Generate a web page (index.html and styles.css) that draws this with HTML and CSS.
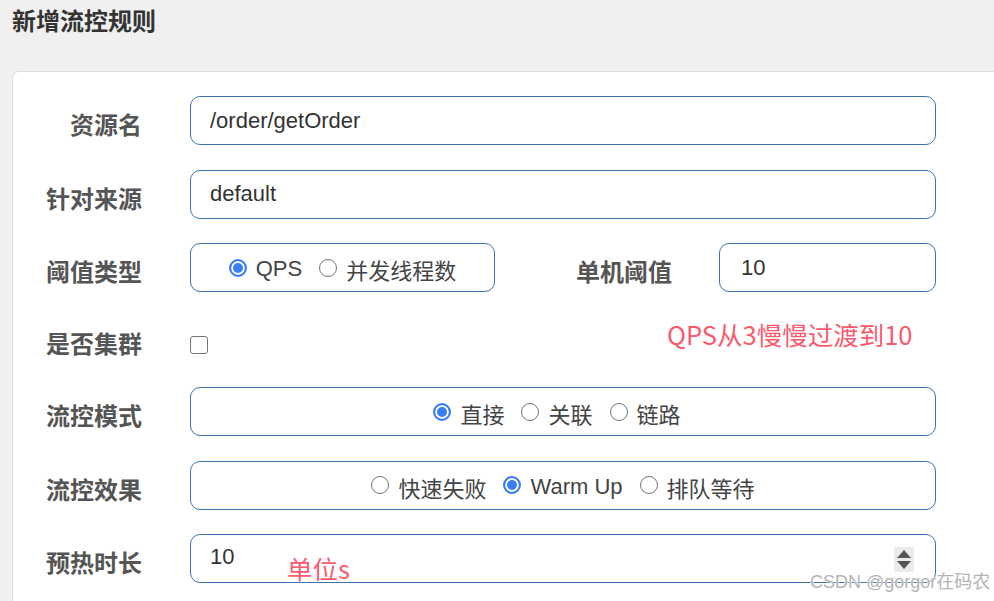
FILE: index.html
```html
<!DOCTYPE html>
<html lang="zh">
<head>
<meta charset="utf-8">
<title>新增流控规则</title>
<link rel="stylesheet" href="styles.css">
</head>
<body>
<h4 class="title">新增流控规则</h4>
<div class="card">
  <div class="form">
    <div class="row">
      <label class="lbl">资源名</label>
      <div class="field">/order/getOrder</div>
    </div>
    <div class="row">
      <label class="lbl">针对来源</label>
      <div class="field">default</div>
    </div>
    <div class="row">
      <label class="lbl">阈值类型</label>
      <div class="split">
        <div class="field group narrow">
          <span class="opt"><span class="radio on"></span>QPS</span>
          <span class="opt"><span class="radio"></span>并发线程数</span>
        </div>
        <label class="lbl lbl2">单机阈值</label>
        <div class="field grow">10</div>
      </div>
    </div>
    <div class="row short">
      <label class="lbl">是否集群</label>
      <div class="chkwrap"><span class="check"></span></div>
    </div>
    <div class="row">
      <label class="lbl">流控模式</label>
      <div class="field group shifted">
        <span class="opt"><span class="radio on"></span>直接</span>
        <span class="opt"><span class="radio"></span>关联</span>
        <span class="opt"><span class="radio"></span>链路</span>
      </div>
    </div>
    <div class="row">
      <label class="lbl">流控效果</label>
      <div class="field group">
        <span class="opt"><span class="radio"></span>快速失败</span>
        <span class="opt"><span class="radio on"></span>Warm Up</span>
        <span class="opt"><span class="radio"></span>排队等待</span>
      </div>
    </div>
    <div class="row">
      <label class="lbl">预热时长</label>
      <div class="field num">
        <span>10</span>
        <span class="spin"><span class="up"></span><span class="down"></span></span>
      </div>
    </div>
  </div>
</div>
<div class="note note-qps">QPS从3慢慢过渡到10</div>
<div class="note note-unit">单位s</div>
<div class="watermark">CSDN @gorgor在码农</div>
</body>
</html>
```
FILE: styles.css
```css
html, body {
  margin: 0;
  padding: 0;
}
body {
  background: #f0f0f0;
  width: 994px;
  height: 601px;
  overflow: hidden;
  position: relative;
  font-family: "Liberation Sans", "Noto Sans CJK SC", sans-serif;
}
.title {
  margin: 0;
  padding: 7px 0 0 12px;
  height: 71px;
  box-sizing: border-box;
  font-size: 24px;
  line-height: 30px;
  font-weight: bold;
  color: #333;
}
.card {
  margin-left: 12px;
  width: 1010px;
  height: 560px;
  background: #fff;
  border: 1px solid #dcdcdc;
  border-top-left-radius: 7px;
  box-sizing: border-box;
  padding-top: 24px;
}
.form {
  display: flex;
  flex-direction: column;
  gap: 24.5px;
}
.row {
  display: grid;
  grid-template-columns: 129px 746px;
  column-gap: 48px;
  align-items: center;
  height: 49px;
}
.row.short {
  height: 46px;
}
.lbl {
  text-align: right;
  font-size: 24px;
  font-weight: bold;
  color: #555;
  padding-top: 6px;
  white-space: nowrap;
}
.field {
  height: 49px;
  box-sizing: border-box;
  border: 1px solid #3f73b0;
  border-radius: 10px;
  padding: 0 19px;
  display: flex;
  align-items: center;
  font-size: 22px;
  color: #333;
}
.split {
  display: flex;
  align-items: center;
}
.narrow {
  width: 305px;
  flex: none;
}
.lbl2 {
  width: 177px;
  flex: none;
  box-sizing: border-box;
}
.grow {
  flex: 1;
  margin-left: 47px;
  padding-left: 21px;
}
.group {
  justify-content: center;
  gap: 17px;
  padding-top: 3px;
}
.group.shifted {
  padding-right: 31px;
}
.opt {
  display: inline-flex;
  align-items: center;
  gap: 9px;
  font-size: 22px;
  color: #444;
  white-space: nowrap;
}
.radio {
  flex: none;
  width: 18px;
  height: 18px;
  box-sizing: border-box;
  border-radius: 50%;
  border: 1.5px solid #767676;
  background: #fff;
  margin-top: -3px;
}
.radio.on {
  border: 2px solid #3b7ef4;
  background: #3b7ef4;
  box-shadow: inset 0 0 0 2px #fff;
}
.chkwrap {
  display: flex;
  align-items: center;
  padding-top: 10px;
}
.check {
  flex: none;
  width: 18px;
  height: 18px;
  box-sizing: border-box;
  border: 1.5px solid #767676;
  border-radius: 3px;
  background: #fff;
}
.num {
  justify-content: space-between;
  padding-right: 21px;
  padding-bottom: 3px;
}
.spin {
  flex: none;
  width: 20px;
  height: 25px;
  background: #ececec;
  display: flex;
  flex-direction: column;
  align-items: center;
  justify-content: center;
  gap: 3px;
  margin-top: 5px;
}
.up {
  width: 0;
  height: 0;
  border-left: 7px solid transparent;
  border-right: 7px solid transparent;
  border-bottom: 8px solid #555;
}
.down {
  width: 0;
  height: 0;
  border-left: 7px solid transparent;
  border-right: 7px solid transparent;
  border-top: 8px solid #555;
}
.note {
  position: absolute;
  color: #fb5a6e;
  font-family: "Noto Sans CJK SC", "Liberation Sans", sans-serif;
  font-size: 25.5px;
  line-height: 30px;
  white-space: nowrap;
}
.note-qps {
  left: 667px;
  top: 319px;
}
.note-unit {
  left: 287px;
  top: 553px;
}
.watermark {
  position: absolute;
  left: 810px;
  top: 571px;
  font-size: 18px;
  line-height: 22px;
  color: #b4b4b4;
  white-space: nowrap;
  text-shadow: 0 0 2px #fff, 0 0 1px #fff;
}
```
